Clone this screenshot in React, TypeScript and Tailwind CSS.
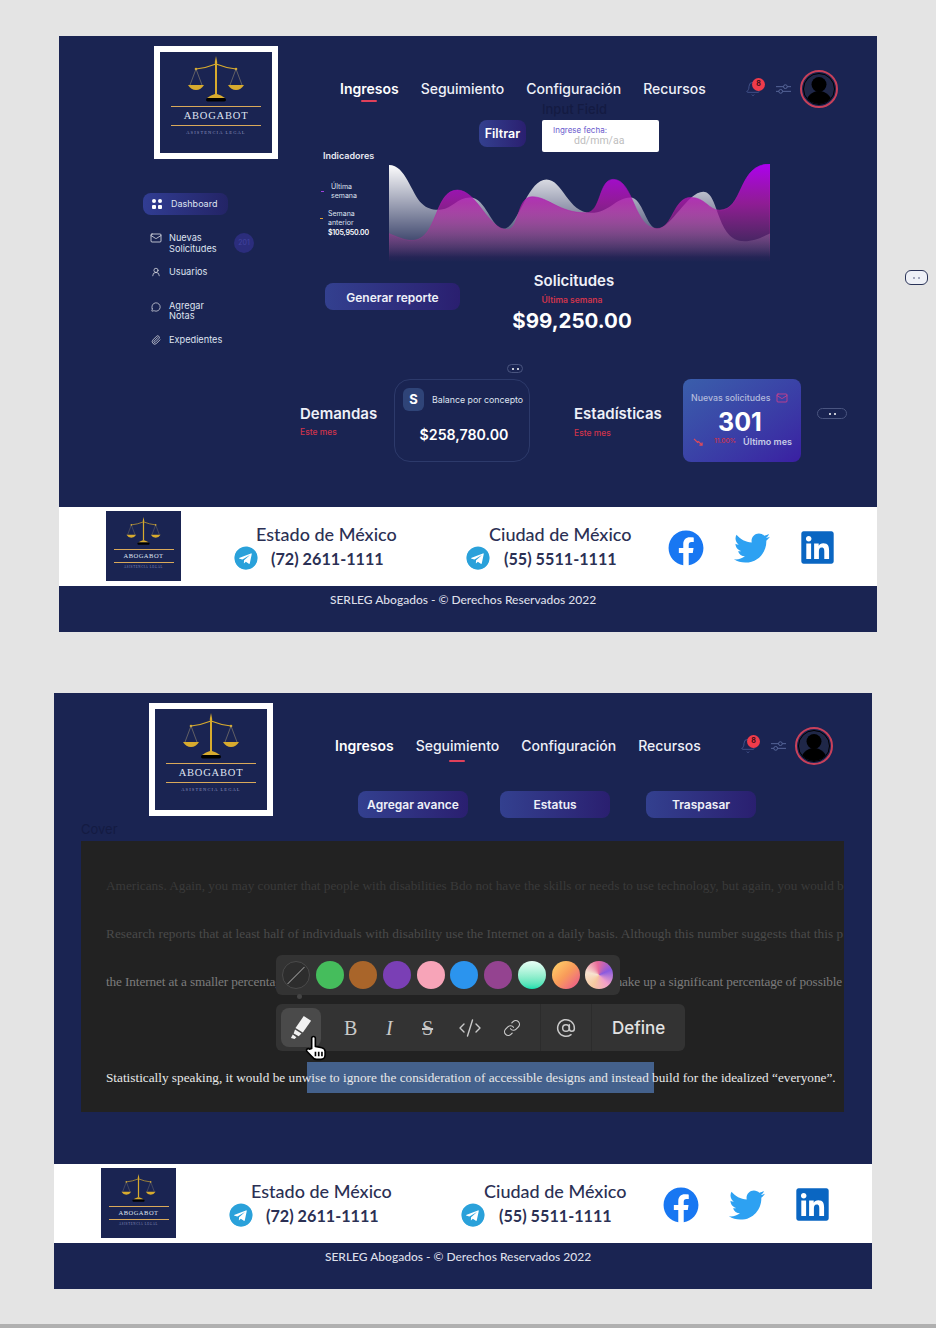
import { AtSign, Bell, CodeXml, Link as LinkIcon, Mail, MessageCircle, Paperclip, UserRound } from "lucide-react";
import { FaFacebook, FaLinkedin, FaTelegram, FaTwitter } from "react-icons/fa";

const navItems = ["Ingresos", "Seguimiento", "Configuración", "Recursos"];

const Scales = ({ className }: { className: string }) => (
  <svg viewBox="0 0 60 46" className={className} fill="none">
    <path d="M30 0 L31.2 6 L31 9 L31 38 L29 38 L29 9 L28.8 6 Z" fill="#d8ab2e" />
    <path d="M10 13 Q20 12 30 8 Q40 12 50 13" stroke="#d8ab2e" strokeWidth="1.1" />
    <circle cx="10" cy="13" r="1.3" fill="#d8ab2e" />
    <circle cx="50" cy="13" r="1.3" fill="#d8ab2e" />
    <path d="M10 13 L4 29 M10 13 L16 29 M50 13 L44 29 M50 13 L56 29" stroke="#a89a78" strokeWidth="0.5" />
    <path d="M2 29 L18 29 Q15 34 10 34 Q5 34 2 29 Z" fill="#d8ab2e" />
    <path d="M42 29 L58 29 Q55 34 50 34 Q45 34 42 29 Z" fill="#d8ab2e" />
    <path d="M21 42 Q25 39 29 38 L31 38 Q35 39 39 42 Z" fill="#d8ab2e" />
    <rect x="20" y="42" width="20" height="3.5" rx="1.7" fill="#000" />
  </svg>
);

const Logo = () => (
  <div className="w-[124px] h-[113px] border-[6px] border-white bg-[#1a2452] flex flex-col items-center pt-[4px] shrink-0">
    <Scales className="w-[60px] h-[46px]" />
    <div className="w-[90px] h-px bg-[#d9a95a] mt-[4px]" />
    <p className="font-['Liberation_Serif',serif] text-[10.5px] leading-[18px] tracking-[0.8px] text-[#dfe3f0]">ABOGABOT</p>
    <div className="w-[90px] h-px bg-[#d9a95a]" />
    <p className="font-['Liberation_Serif',serif] text-[4.5px] leading-[6px] tracking-[1.1px] text-[#8f97c0] mt-[4px]">ASISTENCIA LEGAL</p>
  </div>
);

const SmallLogo = () => (
  <div className="w-[75px] h-[70px] -mt-px bg-[#1a2452] flex flex-col items-center pt-[6px] shrink-0">
    <Scales className="w-[37px] h-[28px]" />
    <div className="w-[60px] h-px bg-[#d9a95a] mt-[4px]" />
    <p className="font-['Liberation_Serif',serif] text-[6.5px] leading-[12px] tracking-[0.5px] text-[#dfe3f0]">ABOGABOT</p>
    <div className="w-[60px] h-px bg-[#d9a95a]" />
    <p className="font-['Liberation_Serif',serif] text-[3px] leading-[4px] tracking-[0.7px] text-[#8f97c0] mt-[2px]">ASISTENCIA LEGAL</p>
  </div>
);

const Nav = ({ active, barClass }: { active: string; barClass: string }) => (
  <div className="flex items-center h-[38px] mt-[34px] pl-[17px]">
    <div className="flex items-center gap-[22px] w-[405px]">
      {navItems.map((item) => (
        <div key={item} className="relative text-[14px] leading-[20px] font-medium text-[#eef0f8] whitespace-nowrap">
          <span className={item === "Ingresos" ? "font-semibold text-white" : ""}>{item}</span>
          {item === active && (
            <div className={`absolute left-1/2 -translate-x-1/2 w-[16px] h-[2.5px] rounded-full bg-[#e0405a] ${barClass}`} />
          )}
        </div>
      ))}
    </div>
    <div className="relative w-[18px] h-[18px] mt-[2px]">
      <Bell size={16} strokeWidth={1.3} className="text-[#46568f]" />
      <div className="absolute -top-[3px] left-[7px] w-[13px] h-[13px] rounded-full bg-[#ef3b4b] text-[#3a0d16] text-[7px] font-bold flex items-center justify-center">8</div>
    </div>
    <svg viewBox="0 0 16 12" className="w-[15px] h-[12px] ml-[13px]" fill="none" stroke="#5a6a9d" strokeWidth="1">
      <path d="M0 3.5 H8 M12 3.5 H16 M0 8.5 H3 M7 8.5 H16" />
      <circle cx="10" cy="3.5" r="2" />
      <circle cx="5" cy="8.5" r="2" />
    </svg>
    <div className="w-[38px] h-[38px] ml-[9px] rounded-full border-2 border-[#c8405a] p-[1px]">
      <div className="relative w-full h-full rounded-full overflow-hidden bg-[#1f2748] border border-black">
        <div className="absolute left-1/2 -translate-x-1/2 top-[3px] w-[15px] h-[15px] rounded-full bg-black" />
        <div className="absolute left-1/2 -translate-x-1/2 top-[17px] w-[26px] h-[20px] rounded-t-full bg-black" />
      </div>
    </div>
  </div>
);

const Footer = () => (
  <>
    <div className="h-[79px] bg-white flex items-center pl-[47px] font-['Lato',sans-serif] text-[#2b3054]">
      <SmallLogo />
      <div className="ml-[53px] w-[232px]">
        <p className="text-[18px] leading-[23px] font-medium pl-[22px]">Estado de México</p>
        <div className="flex items-center gap-[13px] text-[16.2px] leading-[23px] font-bold">
          <FaTelegram size={24} className="text-[#2aa1da] bg-white rounded-full" />
          <span>(72) 2611-1111</span>
        </div>
      </div>
      <div className="w-[202px]">
        <p className="text-[18px] leading-[23px] font-medium pl-[23px]">Ciudad de México</p>
        <div className="flex items-center gap-[14px] text-[16.2px] leading-[23px] font-bold">
          <FaTelegram size={24} className="text-[#2aa1da] bg-white rounded-full" />
          <span>(55) 5511-1111</span>
        </div>
      </div>
      <FaFacebook size={36} className="text-[#1877f2] mt-[2px]" />
      <FaTwitter size={36} className="text-[#2da1f2] ml-[30px] mt-[2px]" />
      <FaLinkedin size={37} className="text-[#0a66c2] ml-[29px] mt-[2px]" />
    </div>
    <div className="h-[46px] bg-[#1a2452] text-center pt-[6px] pr-[10px] font-['Lato',sans-serif] text-[12px] leading-[16px] font-medium text-[#dcdfe8]">
      SERLEG Abogados - © Derechos Reservados 2022
    </div>
  </>
);

const Pill = ({ className }: { className: string }) => (
  <div className={`flex items-center justify-center gap-[3px] rounded-full border border-[#4a5580] ${className}`}>
    <span className="w-[2px] h-[2px] bg-white rounded-full" />
    <span className="w-[2px] h-[2px] bg-white rounded-full" />
  </div>
);

const Chart = () => (
  <svg viewBox="193 312 1069 293" preserveAspectRatio="none" className="w-[381px] h-[98px]">
    <defs>
      <linearGradient id="white" gradientUnits="userSpaceOnUse" x1="0" y1="312" x2="0" y2="605">
        <stop offset="0" stopColor="#ffffff" />
        <stop offset="0.95" stopColor="#ffffff" stopOpacity="0" />
      </linearGradient>
      <linearGradient id="magenta" gradientUnits="userSpaceOnUse" x1="0" y1="312" x2="0" y2="605">
        <stop offset="0" stopColor="#ad00f0" />
        <stop offset="0.4" stopColor="#b01aa8" stopOpacity="0.78" />
        <stop offset="1" stopColor="#c8308a" stopOpacity="0" />
      </linearGradient>
    </defs>
    <path
      d="M193 315 C240 315 255 400 285 430 C300 447 320 450 340 448 C370 445 385 412 420 412 C465 412 480 505 515 505 C555 505 580 358 635 358 C680 358 695 458 760 458 C810 458 830 412 870 412 C905 412 915 505 945 505 C985 505 1030 395 1075 395 C1120 395 1110 543 1190 543 C1220 543 1240 530 1262 520 L1262 605 L193 605 Z"
      fill="url(#white)"
    />
    <path
      d="M193 520 C215 530 240 542 262 540 C330 535 320 390 385 390 C440 390 470 508 525 508 C560 508 550 410 595 410 C640 410 670 458 745 458 C790 458 780 358 822 358 C880 358 880 505 945 505 C990 505 990 412 1040 412 C1080 412 1090 450 1120 450 C1190 450 1170 312 1262 312 L1262 605 L193 605 Z"
      fill="url(#magenta)"
      stroke="url(#magenta)"
      strokeWidth="2"
    />
  </svg>
);

const sidebarText = "text-[9.2px] leading-[10.5px] text-[#dfe3f0]";

const Sidebar = () => (
  <div className="flex flex-col items-start pl-[84px] mt-[34px]">
    <div className="w-[85px] h-[22px] rounded-lg bg-linear-to-r from-[#313d93] to-[#232466] flex items-center pl-[9px] gap-[9px]">
      <div className="grid grid-cols-2 gap-[1.5px] w-[10px]">
        <span className="w-[4px] h-[4px] bg-white rounded-full" />
        <span className="w-[4px] h-[4px] bg-white rounded-full" />
        <span className="w-[4px] h-[4px] bg-white rounded-[1px]" />
        <span className="w-[4px] h-[4px] bg-white rounded-[1px]" />
      </div>
      <span className="text-[9px] text-[#dfe3f0]">Dashboard</span>
    </div>
    <div className="flex items-start mt-[18px] pl-[7px]">
      <Mail size={12} strokeWidth={1.4} className="text-white mt-[-1px]" />
      <p className={`${sidebarText} ml-[7px] w-[60px]`}>Nuevas Solicitudes</p>
      <div className="w-[20px] h-[20px] rounded-full bg-[#2b2d7c] text-[#4143a0] text-[7px] flex items-center justify-center ml-[5px]">201</div>
    </div>
    <div className="flex items-center mt-[13px] pl-[8px]">
      <UserRound size={10} strokeWidth={1.5} className="text-white" />
      <p className={`${sidebarText} ml-[8px]`}>Usuarios</p>
    </div>
    <div className="flex items-start mt-[23px] pl-[8px]">
      <MessageCircle size={10} strokeWidth={1.5} className="text-white mt-[1px]" />
      <p className={`${sidebarText} ml-[8px] w-[50px]`}>Agregar Notas</p>
    </div>
    <div className="flex items-center mt-[13px] pl-[8px]">
      <Paperclip size={10} strokeWidth={1.5} className="text-white" />
      <p className={`${sidebarText} ml-[8px]`}>Expedientes</p>
    </div>
  </div>
);

const Dashboard = () => (
  <div className="h-[471px] bg-[#1a2452] text-white flex flex-col">
    <div className="flex h-[328px]">
      <div className="w-[264px] shrink-0 pt-[10px]">
        <div className="pl-[95px]">
          <Logo />
        </div>
        <Sidebar />
      </div>
      <div className="flex-1">
        <Nav active="Ingresos" barClass="-bottom-[3px]" />
        <div className="flex items-start mt-[12px] pl-[156px]">
          <button className="w-[47px] h-[27px] pt-[2px] rounded-lg bg-linear-to-r from-[#33408f] to-[#2a1f70] text-[12.5px] font-semibold">Filtrar</button>
          <div className="relative ml-[16px] w-[117px] h-[32px] bg-white rounded-[2px] pl-[11px] pt-[6px]">
            <p className="absolute -top-[20px] left-0 text-[13px] font-medium text-[#141b42] whitespace-nowrap">Input Field</p>
            <p className="text-[8px] leading-[9px] text-[#6a5acd]">Ingrese fecha:</p>
            <p className="font-['Roboto',sans-serif] text-[10.5px] leading-[11px] text-[#bdbdbd] pl-[21px]">dd/mm/aa</p>
          </div>
        </div>
        <p className="text-[9px] leading-[11px] font-semibold text-[#e8e8f0] -mt-[2px]">Indicadores</p>
        <div className="flex mt-[3px] -ml-[3px]">
          <div className="w-[69px] shrink-0 pt-[18px] text-[7px] leading-[9px] text-[#dfe3f0]">
            <div className="flex items-center">
              <span className="w-[3px] h-px bg-[#a040e0] ml-[1px]" />
              <p className="ml-[7px] w-[32px]">Última semana</p>
            </div>
            <div className="flex items-center mt-[9px]">
              <span className="w-[3px] h-px bg-[#e0a030]" />
              <p className="ml-[5px] w-[34px]">Semana anterior</p>
            </div>
            <p className="ml-[8px] mt-[1px] font-semibold text-white tracking-[-0.2px]">$105,950.00</p>
          </div>
          <Chart />
        </div>
        <div className="flex items-start mt-[10px] pl-[2px]">
          <button className="w-[135px] h-[27px] mt-[11px] pt-[2px] rounded-lg bg-linear-to-r from-[#33408f] to-[#2a1f70] text-[12px] font-semibold text-[#eef0f8]">Generar reporte</button>
          <div className="ml-[52px] w-[120px] flex flex-col items-center">
            <p className="text-[15px] leading-[18px] font-semibold text-[#eef0f8] ml-[4px]">Solicitudes</p>
            <p className="text-[8.5px] leading-[12px] mt-[4px] font-semibold text-[#d0344c]">Última semana</p>
            <p className="text-[20.5px] leading-[26px] mt-[2px] font-bold whitespace-nowrap">$99,250.00</p>
          </div>
        </div>
      </div>
    </div>
    <div className="pl-[448px]">
      <Pill className="w-[16px] h-[9px]" />
    </div>
    <div className="flex items-start mt-[6px] pl-[241px]">
      <div className="w-[94px] pt-[26px]">
        <p className="text-[15px] leading-[18px] font-semibold text-[#eef0f8] whitespace-nowrap">Demandas</p>
        <p className="text-[8.5px] leading-[12px] mt-[3px] font-medium text-[#d0344c]">Este mes</p>
      </div>
      <div className="w-[136px] h-[83px] rounded-2xl border border-[#2d3a6b] pl-[8px] pt-[8px]">
        <div className="flex items-center">
          <div className="w-[21px] h-[23px] rounded-md bg-[#2f4478] flex items-center justify-center text-[13px] font-bold">S</div>
          <p className="text-[8.8px] ml-[8px] text-[#dfe3f0] whitespace-nowrap">Balance por concepto</p>
        </div>
        <p className="text-[14.2px] leading-[18px] font-semibold text-center mt-[15px] pr-[4px]">$258,780.00</p>
      </div>
      <div className="w-[109px] pl-[44px] pt-[26px] box-content">
        <p className="text-[15px] leading-[18px] font-semibold text-[#eef0f8] whitespace-nowrap">Estadísticas</p>
        <p className="text-[8.5px] leading-[12px] mt-[4px] font-medium text-[#d0344c]">Este mes</p>
      </div>
      <div className="w-[118px] h-[83px] rounded-lg bg-linear-to-br from-[#3a5eab] to-[#3a1ea2] pl-[8px] pt-[13px]">
        <div className="flex items-center">
          <p className="text-[8.8px] leading-[12px] text-[#b4bcdc] font-medium whitespace-nowrap">Nuevas solicitudes</p>
          <Mail size={12} strokeWidth={1.5} className="text-[#e0408a] ml-[6px]" />
        </div>
        <p className="text-[25px] leading-[28px] font-bold text-center pr-[12px] mt-[4px]">301</p>
        <div className="flex items-center pl-[2px]">
          <svg viewBox="0 0 12 10" className="w-[11px] h-[9px]" fill="none" stroke="#e04a5a" strokeWidth="1.3">
            <path d="M1 1 L5 5 L6 4 L10 8 M10 5 V8 H7" />
          </svg>
          <p className="text-[6.5px] text-[#d0344c] font-medium ml-[10px]">11.00%</p>
          <p className="text-[9px] leading-[12px] font-semibold text-[#c6cbe6] ml-[7px] whitespace-nowrap">Último mes</p>
        </div>
      </div>
      <Pill className="w-[30px] h-[11px] mt-[29px] ml-[16px]" />
    </div>
  </div>
);

const colors = [
  "bg-[#45bd5c]",
  "bg-[#a9652a]",
  "bg-[#7a3fb5]",
  "bg-[#f7a4b8]",
  "bg-[#2b94ee]",
  "bg-[#944390]",
  "bg-linear-to-b from-[#e8fff6] to-[#00dfae]",
  "bg-linear-to-br from-[#ffd76a] via-[#f89a5a] to-[#e84a8a]",
  "bg-[conic-gradient(from_210deg,#f6c9a0,#f7e3d0,#e86a9a,#8a5ae0,#f2a0c8,#f6c9a0)]",
];

const textLines = [
  { text: "Americans. Again, you may counter that people with disabilities Bdo not have the skills or needs to use technology, but again, you would be", cls: "text-[#3a3a3a] mt-[35px]" },
  { text: "Research reports that at least half of individuals with disability use the Internet on a daily basis. Although this number suggests that this p", cls: "text-[#4a4a4a] mt-[28px] tracking-[0.06px]" },
  { text: "the Internet at a smaller percentage than individuals without disability, those with disabilities still make up a significant percentage of possible", cls: "text-[#7c7c7c] mt-[28px] tracking-[-0.12px]" },
];

const Toolbar = () => (
  <div className="absolute left-[195px] top-[114px] flex flex-col gap-[9px] font-['Inter',sans-serif]">
    <div className="w-[344px] h-[40px] rounded-md bg-[#333333] flex items-center pl-[6px] gap-[5.7px]">
      <div className="w-[28px] h-[28px] rounded-full border border-[#4a4a4a] bg-[#2d2d2d] flex items-center justify-center">
        <div className="w-[24px] h-px bg-[#999] -rotate-45" />
      </div>
      {colors.map((c) => (
        <div key={c} className={`w-[28px] h-[28px] rounded-full ${c}`} />
      ))}
    </div>
    <div className="relative w-[409px] h-[47px] rounded-md bg-[#333333] flex items-center pl-[5px] text-[#c9c9c9]">
      <div className="absolute left-[21px] -top-[10px] w-[5px] h-[5px] rounded-full bg-[#444]" />
      <div className="w-[40px] h-[39px] rounded-lg bg-[#4a4a4a] flex items-center justify-center">
        <svg viewBox="0 0 24 28" className="w-[22px] h-[26px]" fill="#f2f2f2">
          <path d="M15 1 L23 6 L14 19 L6 14 Z" />
          <path d="M5.5 15.5 L12.5 20 L9.5 23 L4 20 Z" />
          <path d="M3 21 L7 24 L5 26 L1 25 Z" />
        </svg>
      </div>
      <span className="font-['Liberation_Serif',serif] text-[20px] ml-[23px] w-[42px]">B</span>
      <span className="font-['Liberation_Serif',serif] italic text-[20px] w-[36px]">I</span>
      <span className="font-['Liberation_Serif',serif] text-[20px] line-through w-[36px]">S</span>
      <CodeXml size={24} strokeWidth={1.4} />
      <LinkIcon size={18} strokeWidth={1.6} className="ml-[21px]" />
      <div className="w-px h-[47px] bg-[#2c2c2c] ml-[19px]" />
      <AtSign size={20} strokeWidth={1.8} className="ml-[15px]" />
      <div className="w-px h-[47px] bg-[#2c2c2c] ml-[15px]" />
      <span className="text-[17px] font-medium text-[#e2e2e2] ml-[20px]">Define</span>
      <svg viewBox="0 0 24 24" className="absolute left-[27px] top-[30px] w-[26px] h-[27px]" fill="#fff" stroke="#000" strokeWidth="1.5" strokeLinejoin="round">
        <path d="M8 13 V3.5 a1.7 1.7 0 0 1 3.4 0 V11 l6 1.2 c2 .5 3 1.5 3 3.5 V19 c0 2-1.5 4-4 4 h-4 c-2 0-3-1-4-2.5 L3.5 15.5 c-1-1.8 1-3.2 2.5-2 Z" />
        <path d="M11.5 16 v4 M14.5 16 v4 M17.5 16 v4" fill="none" />
      </svg>
    </div>
  </div>
);

const Tracking = () => (
  <div className="h-[471px] bg-[#1a2452] text-white flex flex-col">
    <div className="flex h-[127px]">
      <div className="w-[264px] shrink-0 pt-[10px] pl-[95px]">
        <Logo />
      </div>
      <div className="flex-1">
        <Nav active="Seguimiento" barClass="-bottom-[6px]" />
        <div className="flex mt-[26px] pl-[40px]">
          <button className="w-[110px] h-[27px] pt-[1px] rounded-lg bg-linear-to-r from-[#33408f] to-[#2a1f70] text-[12px] font-semibold text-[#eef0f8]">Agregar avance</button>
          <button className="w-[110px] h-[27px] pt-[1px] ml-[32px] rounded-lg bg-linear-to-r from-[#33408f] to-[#2a1f70] text-[12px] font-semibold text-[#eef0f8]">Estatus</button>
          <button className="w-[110px] h-[27px] pt-[1px] ml-[36px] rounded-lg bg-linear-to-r from-[#33408f] to-[#2a1f70] text-[12px] font-semibold text-[#eef0f8]">Traspasar</button>
        </div>
      </div>
    </div>
    <p className="pl-[27px] pb-[3px] text-[13px] leading-[18px] text-[#141b42]">Cover</p>
    <div className="relative ml-[27px] w-[763px] h-[271px] bg-[#222222] overflow-hidden pl-[25px] font-['Liberation_Serif',serif] text-[13.25px] leading-[20px]">
      {textLines.map((line) => (
        <p key={line.text} className={`whitespace-nowrap ${line.cls}`}>{line.text}</p>
      ))}
      <p className="whitespace-nowrap text-[#e8e8e8] mt-[76px]">
        <span className="relative z-10">Statistically speaking, it would be unw</span>
        <span className="bg-[#44618c] py-[8px] pl-[4px] -ml-[4px] pr-[5px] -mr-[5px]">ise to ignore the consideration of accessible designs and instead</span>
        <span className="relative z-10"> build for the idealized “everyone”.</span>
      </p>
      <Toolbar />
    </div>
  </div>
);

const App = () => {
  return (
    <div className="w-[936px] h-[1328px] bg-[#e4e4e4] overflow-hidden flex flex-col font-['Inter',sans-serif]">
      <div className="flex items-start pl-[59px] pt-[36px]">
        <div className="w-[818px] shrink-0">
          <Dashboard />
          <Footer />
        </div>
        <Pill className="w-[23px] h-[15px] ml-[28px] mt-[234px] !border-[#2a3358] !border-[1.5px] !rounded-[6px] bg-[#eef0f6] [&>span]:!bg-[#8a90a8]" />
      </div>
      <div className="w-[818px] ml-[54px] mt-[61px]">
        <Tracking />
        <Footer />
      </div>
      <div className="mt-auto h-[4px] bg-[#b0b0b0]" />
    </div>
  );
};

export default App;
